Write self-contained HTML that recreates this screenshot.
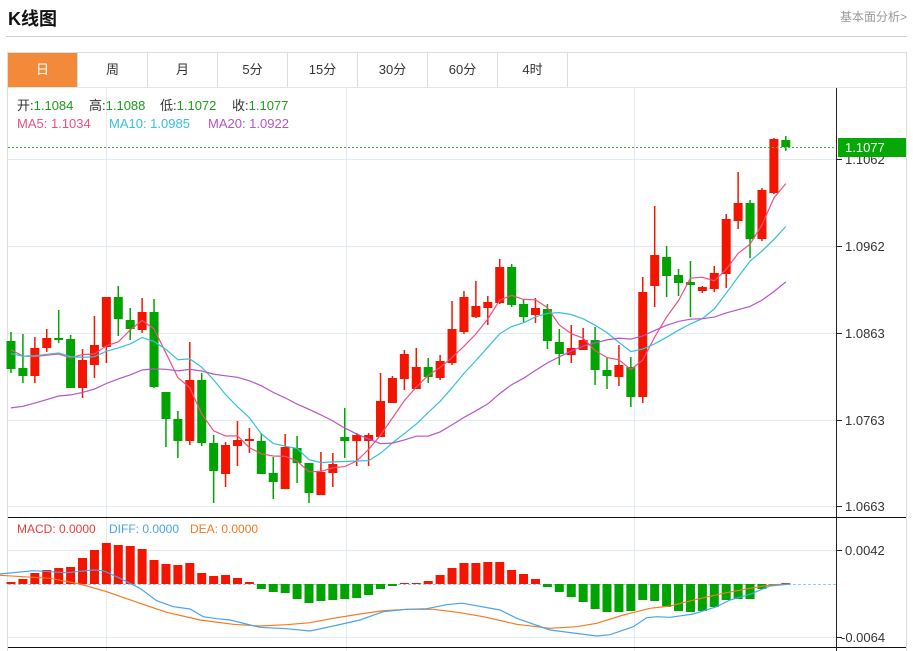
<!DOCTYPE html>
<html><head><meta charset="utf-8">
<style>
*{margin:0;padding:0;box-sizing:border-box}
body{width:913px;height:651px;background:#fff;font-family:"Liberation Sans","Noto Sans CJK SC",sans-serif;position:relative;overflow:hidden}
.t{position:absolute;white-space:nowrap}
#title{left:8px;top:5px;font-size:18px;font-weight:bold;color:#111}
#more{right:6px;top:8px;font-size:12px;color:#999}
#hr{position:absolute;left:6px;top:36px;width:901px;height:1px;background:#d0d0d0}
#tabs{position:absolute;left:7px;top:52px;width:900px;height:36px;border:1px solid #ddd;border-bottom:1px solid #e4e4e4}
.tab{position:absolute;top:0;height:34px;width:70px;border-right:1px solid #ddd;text-align:center;line-height:34px;font-size:13px;color:#333}
.tab.on{background:#f28a3a;color:#fff}
svg{position:absolute;left:0;top:0}
</style></head><body>
<div class="t" id="title">K线图</div>
<div class="t" id="more">基本面分析&gt;</div>
<div id="hr"></div>
<div id="tabs">
<div class="tab on" style="left:0">日</div>
<div class="tab" style="left:70px">周</div>
<div class="tab" style="left:140px">月</div>
<div class="tab" style="left:210px">5分</div>
<div class="tab" style="left:280px">15分</div>
<div class="tab" style="left:350px">30分</div>
<div class="tab" style="left:420px">60分</div>
<div class="tab" style="left:490px">4时</div>
</div>
<svg id="s" width="913" height="651" xmlns="http://www.w3.org/2000/svg" font-family="Liberation Sans, Noto Sans CJK SC, sans-serif">
<line x1="906.5" y1="88" x2="906.5" y2="651" stroke="#ddd"/>
<line x1="7.5" y1="88" x2="7.5" y2="651" stroke="#ddd"/>
<g stroke="#e2ebf3" stroke-width="1">
<line x1="8" y1="159.5" x2="836" y2="159.5"/><line x1="8" y1="246.5" x2="836" y2="246.5"/>
<line x1="8" y1="333.5" x2="836" y2="333.5"/><line x1="8" y1="420.5" x2="836" y2="420.5"/>
<line x1="8" y1="506.5" x2="836" y2="506.5"/>
<line x1="8" y1="550.5" x2="836" y2="550.5"/><line x1="8" y1="637.5" x2="836" y2="637.5"/>
<line x1="106.5" y1="88" x2="106.5" y2="651"/><line x1="346.5" y1="88" x2="346.5" y2="651"/><line x1="634.5" y1="88" x2="634.5" y2="651"/>
</g>
<line x1="8" y1="517.5" x2="906" y2="517.5" stroke="#111"/>
<line x1="8" y1="647.5" x2="906" y2="647.5" stroke="#111"/>
<line x1="836.5" y1="88" x2="836.5" y2="651" stroke="#222"/>
<line x1="8" y1="584.5" x2="836" y2="584.5" stroke="#8cd0f0" stroke-dasharray="3,2"/>
<g id="cd"></g>
<line x1="8" y1="147.5" x2="836" y2="147.5" stroke="#3cb83c" stroke-dasharray="2,2"/>
<g stroke="#222"><line x1="836" y1="159.5" x2="842" y2="159.5"/><line x1="836" y1="246.5" x2="842" y2="246.5"/><line x1="836" y1="333.5" x2="842" y2="333.5"/><line x1="836" y1="420.5" x2="842" y2="420.5"/><line x1="836" y1="506.5" x2="842" y2="506.5"/><line x1="836" y1="550.5" x2="842" y2="550.5"/><line x1="836" y1="637.5" x2="842" y2="637.5"/></g>
<g font-size="13" fill="#333">
<text x="845" y="164">1.1062</text><text x="845" y="251">1.0962</text><text x="845" y="338">1.0863</text><text x="845" y="425">1.0763</text><text x="845" y="511">1.0663</text>
<text x="845" y="555">0.0042</text><text x="841" y="642">-0.0064</text>
</g>
<rect x="838" y="138" width="68" height="19" fill="#05a805"/>
<text x="845" y="152" font-size="13" fill="#fff">1.1077</text>
<g font-size="13">
<text x="17" y="110" fill="#333">开:<tspan fill="#1a9c1a">1.1084</tspan></text>
<text x="89" y="110" fill="#333">高:<tspan fill="#1a9c1a">1.1088</tspan></text>
<text x="160" y="110" fill="#333">低:<tspan fill="#1a9c1a">1.1072</tspan></text>
<text x="232" y="110" fill="#333">收:<tspan fill="#1a9c1a">1.1077</tspan></text>
<text x="17" y="128" fill="#ef4f7e">MA5: 1.1034</text>
<text x="109" y="128" fill="#36c0dc">MA10: 1.0985</text>
<text x="208" y="128" fill="#b455c8">MA20: 1.0922</text>
<text x="17" y="533" font-size="12" fill="#ef3b3b">MACD: 0.0000</text>
<text x="109" y="533" font-size="12" fill="#4aa3f0">DIFF: 0.0000</text>
<text x="190" y="533" font-size="12" fill="#f57a1f">DEA: 0.0000</text>
</g>
</svg>
<script>
var C=[
['g',341,369,332,373],['g',368,376,334,383],['r',348,376,337,383],['r',338,348,329,352],['g',338,339,310,343],
['g',339,388,335,388],['r',360,388,349,398],['r',345,365,316,378],['r',297,347,297,363],['g',297,319,286,336],
['g',320,329,308,340],['r',312,330,298,333],['g',312,387,299,388],['g',392,419,392,447],['g',419,441,411,458],
['r',380,441,342,445],['g',380,443,373,446],['g',443,471,435,503],['r',445,474,442,487],['r',440,446,421,466],
['r',439,441,428,453],['g',441,474,433,474],['g',473,482,457,499],['r',447,489,434,489],['g',448,463,436,483],
['g',463,493,463,503],['r',472,495,452,495],['r',464,473,453,487],['g',437,441,408,458],['r',435,441,433,466],
['r',435,441,433,466],['r',401,437,373,437],['r',378,403,376,403],['r',354,379,350,390],['r',367,389,348,389],
['g',367,377,358,383],['r',361,378,355,380],
['r',329,363,301,365],['r',297,332,291,334],['r',306,317,281,318],['r',302,308,296,325],['r',267,303,259,304],
['g',267,305,264,307],['g',304,317,299,322],['r',308,315,298,323],['g',309,341,304,349],['g',342,354,329,365],
['r',348,355,325,363],['r',340,350,328,350],['g',340,370,327,385],['g',370,376,358,389],['r',365,377,345,386],
['g',367,397,357,407],['r',292,397,277,403],['r',255,286,206,307],['g',257,276,246,297],['g',275,283,269,296],
['g',282,285,261,317],['r',287,291,286,293],['r',273,289,266,292],['r',219,274,214,288],['r',203,221,172,229],
['g',203,239,200,258],['r',190,239,188,241],['r',139,193,138,194],['g',140,147,136,151]];
var M=[2,5,11,14,16,17,26,34,41,39,38,35,24,20,19,21,11,8,9,6,2,-5,-8,-9,-15,-19,-17,-16,-15,-14,-11,-5,-2,1,0.5,3,9,
16,21,21,22,22,14,10,5,-3,-8,-13,-18,-25,-28,-28,-27,-16,-17,-23,-27,-28,-27,-23,-16,-15,-15,-5,-1,0];
var X=function(i){return 11+i*11.92};
var h='',cl=[];
C.forEach(function(c,i){var x=X(i),col=c[0]=='r'?'#f21500':'#00a300';
 h+='<line x1="'+x+'" y1="'+c[3]+'" x2="'+x+'" y2="'+c[4]+'" stroke="'+col+'" stroke-width="1.5"/>';
 h+='<rect x="'+(x-4.5)+'" y="'+c[1]+'" width="9" height="'+Math.max(2,c[2]-c[1])+'" fill="'+col+'"/>';
 cl.push(c[0]=='r'?c[1]:c[2]);});
function ma(n,col,pre){var p=[];for(var i=0;i<cl.length;i++){var s=0,k=0;for(var j=Math.max(0,i-n+1);j<=i;j++){s+=cl[j];k++}
 var v=s/k; if(i<n-1){v=(s+pre*(n-k))/n;} p.push(X(i).toFixed(1)+','+v.toFixed(1));}
 h+='<polyline points="'+p.join(' ')+'" fill="none" stroke="'+col+'" stroke-width="1.2"/>';}
ma(5,'#ef4f7e',345);ma(10,'#36c0dc',352);ma(20,'#b455c8',410);
M.forEach(function(m,i){var x=X(i),y0=584,hh=Math.abs(m);if(hh<1)hh=1;
 h+='<rect x="'+(x-4.5)+'" y="'+(m>=0?y0-hh:y0)+'" width="9" height="'+hh+'" fill="'+(m>=0?'#f21500':'#00a300')+'"/>';});
function pl(a,ox){return a.map(function(q){return (q[0]/3+ox).toFixed(1)+','+(q[1]/3+510).toFixed(1)});}
var d1=pl([[0,192],[100,182],[200,188],[280,180],[310,182],[360,205],[420,235],[470,272],[520,290],[570,297],[610,320],[650,326],[690,330],[780,352],[860,356],[930,363],[1000,348],[1080,330],[1150,305],[1220,298],[1280,296],[1340,284],[1380,280]],0)
 .concat(pl([[40,280],[150,300],[200,325],[300,360],[440,378],[480,374],[550,350],[590,323],[620,320],[660,322],[730,312],[800,290],[840,270],[900,253],[960,228],[1020,222]],450));
var d2=pl([[0,196],[150,205],[240,222],[320,245],[420,280],[500,307],[600,330],[700,343],[780,348],[860,344],[930,338],[1000,325],[1080,312],[1150,302],[1220,298],[1300,298],[1380,308]],0)
 .concat(pl([[100,320],[200,343],[300,355],[380,350],[440,340],[520,315],[600,295],[660,288],[740,268],[820,250],[900,235],[960,225],[1020,222]],450));
h+='<polyline points="'+d2.join(' ')+'" fill="none" stroke="#f57a1f" stroke-width="1.2"/>';
h+='<polyline points="'+d1.join(' ')+'" fill="none" stroke="#4aa3f0" stroke-width="1.2"/>';
document.getElementById('cd').innerHTML=h;
</script>
</body></html>
